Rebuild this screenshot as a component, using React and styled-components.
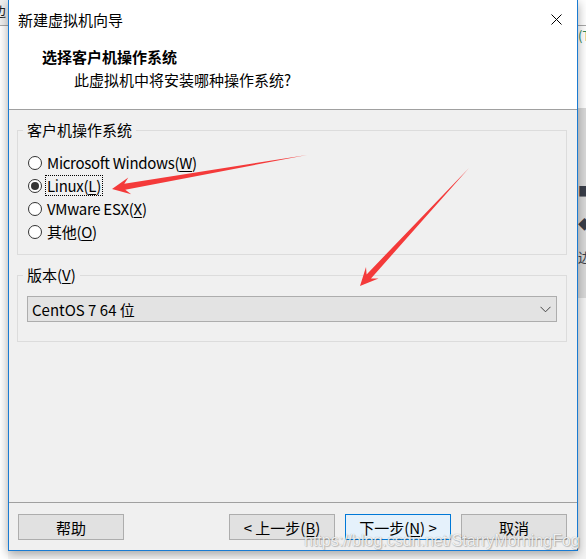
import React from "react";
import styled, { createGlobalStyle } from "styled-components";

const GlobalStyle = createGlobalStyle`
html, body {
  margin: 0;
  padding: 0;
}
body {
  width: 586px;
  height: 559px;
  overflow: hidden;
  background: #ffffff;
  font-family: "Noto Sans CJK SC", "Noto Sans", sans-serif;
}
`;

const Desktop = styled.div`
position: relative;
display: flex;
width: 586px;
height: 559px;
background: #f6f6f6;
`;

const Strip = styled.div`
display: flex;
flex-direction: column;
width: 8px;
flex-shrink: 0;
overflow: hidden;
`;

const StripBlock = styled.div`
height: ${props => props.$h}px;
background: ${props => props.$bg};
border-bottom: ${props => (props.$line ? "1px solid #a8a8a8" : "none")};
color: ${props => props.$color || "#222"};
font-size: 13px;
line-height: ${props => props.$lh || 16}px;
white-space: nowrap;
text-indent: ${props => props.$indent || 0}px;
flex-shrink: 0;
`;

const Window = styled.div`
display: flex;
flex-direction: column;
width: 570px;
height: 551px;
box-sizing: border-box;
flex-shrink: 0;
border: 1px solid #1a7bd2;
border-top: none;
background: #f0f0f0;
box-shadow: 0 3px 10px rgba(0, 0, 0, 0.35);
z-index: 1;
`;

const TitleBar = styled.div`
display: flex;
align-items: center;
justify-content: space-between;
height: 38px;
padding: 0 15px 0 9px;
background: #ffffff;
font-size: 15px;
color: #000;
`;

const Header = styled.div`
height: 72px;
box-sizing: border-box;
padding: 9px 0 0 33px;
background: #ffffff;
border-bottom: 1px solid #a0a0a0;
`;

const HeaderTitle = styled.div`
font-size: 15px;
line-height: 20px;
font-weight: bold;
color: #000;
`;

const HeaderSub = styled.div`
margin: 3px 0 0 32px;
font-size: 15px;
line-height: 20px;
color: #000;
`;

const Body = styled.div`
flex: 1;
padding: 10px 10px 0 8px;
`;

const GroupBox = styled.fieldset`
margin: 0 0 ${props => props.$gap || 0}px;
min-width: 0;
padding: 11px 5px ${props => props.$pb}px;
border: 1px solid #dcdcdc;
`;

const Legend = styled.legend`
padding: 0 4px;
font-size: 15px;
line-height: 20px;
color: #000;
`;

const RadioRow = styled.label`
display: flex;
align-items: center;
height: 23px;
font-size: 15px;
color: #000;
`;

const RadioDot = styled.span`
display: flex;
align-items: center;
justify-content: center;
width: 14px;
height: 14px;
margin-left: 5px;
box-sizing: border-box;
border: 1px solid #333;
border-radius: 50%;
background: #fff;
&::after {
  content: "";
  width: 8px;
  height: 8px;
  border-radius: 50%;
  background: ${props => (props.$checked ? "#333" : "transparent")};
}
`;

const RadioText = styled.span`
margin-left: 4px;
padding: 0 1px;
line-height: 19px;
letter-spacing: -0.3px;
outline: ${props => (props.$focus ? "1px dotted #000" : "none")};
`;

const Key = styled.span`
text-decoration: underline;
text-underline-offset: 2px;
`;

const Select = styled.div`
display: flex;
align-items: center;
justify-content: space-between;
height: 26px;
margin: 0 4px;
padding: 0 5px 0 4px;
box-sizing: border-box;
border: 1px solid #adadad;
background: #e3e3e3;
font-size: 15px;
color: #000;
`;

const Footer = styled.div`
display: flex;
gap: 10px;
padding: 11px 10px 10px 9px;
border-top: 1px solid #a0a0a0;
`;

const Button = styled.div`
display: flex;
align-items: center;
justify-content: center;
width: 106px;
height: 26px;
box-sizing: border-box;
margin-left: ${props => (props.$push ? "auto" : "0")};
border: 1px solid ${props => (props.$primary ? "#0078d7" : "#adadad")};
background: ${props => (props.$primary ? "#e5f1fb" : "#e1e1e1")};
font-size: 15px;
color: #000;
`;

const Watermark = styled.div`
position: absolute;
left: 304px;
top: 531px;
z-index: 3;
font-family: "Liberation Sans", Arial, sans-serif;
font-size: 16px;
line-height: 20px;
color: rgba(255, 255, 255, 0.85);
text-shadow: 0 0 1px rgba(0, 0, 0, 0.35), 1px 1px 1px rgba(0, 0, 0, 0.2);
`;

const Overlay = styled.svg`
position: absolute;
left: 0;
top: 0;
z-index: 2;
pointer-events: none;
`;

const arrowPoints = (tx, ty, px, py) => {
  const dx = px - tx;
  const dy = py - ty;
  const len = Math.hypot(dx, dy);
  const ux = dx / len;
  const uy = dy / len;
  const nx = -uy;
  const ny = ux;
  const at = (along, side) =>
    `${(tx + ux * along + nx * side).toFixed(1)},${(ty + uy * along + ny * side).toFixed(1)}`;
  return [
    at(0, 0),
    at(len - 13, 3),
    at(len - 18, 8.5),
    at(len, 0),
    at(len - 18, -8.5),
    at(len - 13, -3),
  ].join(" ");
};

const CloseIcon = () => (
  <svg width="11" height="11" viewBox="0 0 11 11">
    <path d="M0.5 0.5 L10.5 10.5 M10.5 0.5 L0.5 10.5" stroke="#000" strokeWidth="1" fill="none" />
  </svg>
);

const Chevron = () => (
  <svg width="11" height="7" viewBox="0 0 11 7">
    <polyline points="0.5,0.8 5.5,5.8 10.5,0.8" stroke="#444" strokeWidth="1" fill="none" />
  </svg>
);

const options = [
  { text: "Microsoft Windows(", key: "W" },
  { text: "Linux(", key: "L", checked: true },
  { text: "VMware ESX(", key: "X" },
  { text: "其他(", key: "O" },
];

const App = () => {
  return (
    <Desktop>
      <GlobalStyle />
      <Strip>
        <StripBlock $h={25} $bg="#f0f0f0" $line $indent={-7} $lh={22}>边</StripBlock>
        <StripBlock $h={534} $bg="#ffffff" />
      </Strip>

      <Window>
        <TitleBar>
          <span>新建虚拟机向导</span>
          <CloseIcon />
        </TitleBar>
        <Header>
          <HeaderTitle>选择客户机操作系统</HeaderTitle>
          <HeaderSub>此虚拟机中将安装哪种操作系统?</HeaderSub>
        </Header>

        <Body>
          <GroupBox $gap={10} $pb={11}>
            <Legend>客户机操作系统</Legend>
            {options.map(o => (
              <RadioRow key={o.key}>
                <RadioDot $checked={o.checked} />
                <RadioText $focus={o.checked}>
                  {o.text}<Key>{o.key}</Key>)
                </RadioText>
              </RadioRow>
            ))}
          </GroupBox>

          <GroupBox $pb={19}>
            <Legend>版本(<Key>V</Key>)</Legend>
            <Select>
              <span>CentOS 7 64 位</span>
              <Chevron />
            </Select>
          </GroupBox>
        </Body>

        <Footer>
          <Button>帮助</Button>
          <Button $push>&lt; 上一步(<Key>B</Key>)</Button>
          <Button $primary>下一步(<Key>N</Key>) &gt;</Button>
          <Button>取消</Button>
        </Footer>
      </Window>

      <Strip>
        <StripBlock $h={25} $bg="#ffffff" $line />
        <StripBlock $h={82} $bg="#ffffff" $color="#2e8b57" $lh={20}>(T</StripBlock>
        <StripBlock $h={190} $bg="#d9d9d9" $color="#3a3f4a" $lh={33}>
          <br />
          <br />■<br />◆<br />边
        </StripBlock>
        <StripBlock $h={262} $bg="#f4f4f4" />
      </Strip>

      <Overlay width="586" height="559" viewBox="0 0 586 559">
        <polygon points={arrowPoints(307, 155, 112, 189)} fill="#f43a3a" />
        <polygon points={arrowPoints(469, 168, 360, 286)} fill="#f43a3a" />
      </Overlay>

      <Watermark>https://blog.csdn.net/StarryMorningFog</Watermark>
    </Desktop>
  );
};

export default App;
